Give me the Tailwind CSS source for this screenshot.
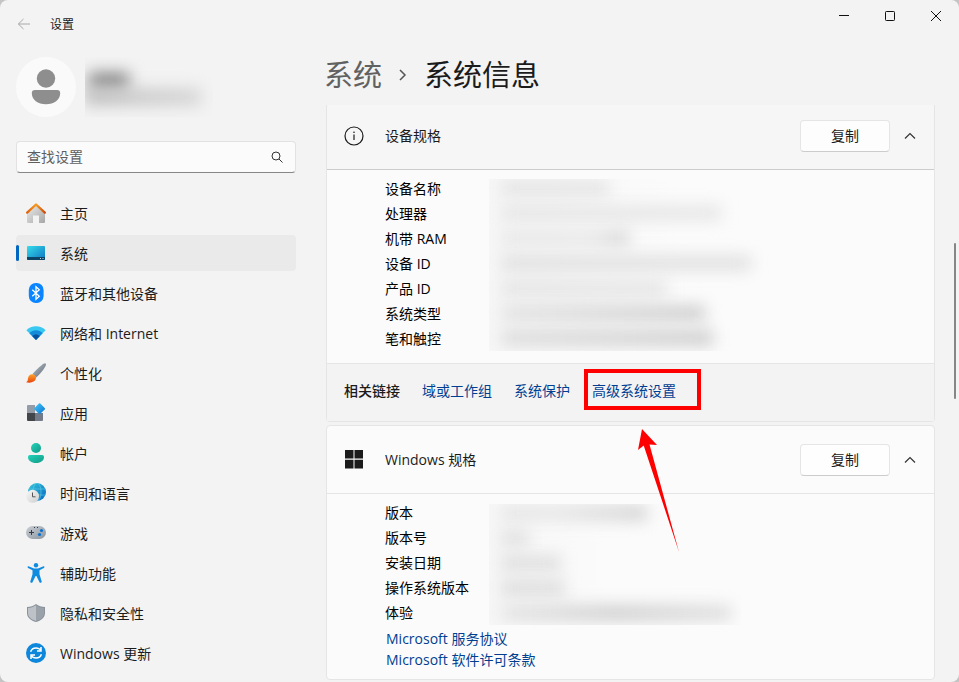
<!DOCTYPE html>
<html lang="zh-CN">
<head>
<meta charset="utf-8">
<meta name="viewport" content="width=device-width, initial-scale=1">
<title>设置</title>
<script src="https://cdn.jsdelivr.net/npm/@tailwindcss/browser@4"></script>
</head>
<body class="bg-[#c4c4c4] font-['Open_Sans','Noto_Sans_CJK_SC',sans-serif] text-sm leading-5 text-[#1b1b1b]">
<div class="relative flex min-h-screen flex-col overflow-hidden rounded-lg bg-[#f3f3f3]">
  <header class="flex h-12 items-start justify-between">
    <div class="flex h-12 items-center gap-[19px] pl-[17px]">
      <button type="button" aria-label="返回" class="text-[#a8a8a8]">
        <svg class="h-3.5 w-3.5" viewBox="0 0 14 14" fill="none" stroke="currentColor"><path d="M13 7H1.5M6.5 2L1.3 7l5.2 5"/></svg>
      </button>
      <span class="pt-0.5 text-xs">设置</span>
    </div>
    <div class="flex h-8">
      <button type="button" aria-label="最小化" class="grid w-[46px] place-items-center"><svg class="h-2.5 w-2.5" viewBox="0 0 10 10" stroke="#111"><path d="M0 4.5h10"/></svg></button>
      <button type="button" aria-label="最大化" class="grid w-[46px] place-items-center"><svg class="h-2.5 w-2.5" viewBox="0 0 10 10" fill="none" stroke="#111"><rect x=".5" y=".5" width="9" height="9" rx=".8"/></svg></button>
      <button type="button" aria-label="关闭" class="grid w-[46px] place-items-center"><svg class="h-2.5 w-2.5" viewBox="0 0 10 10" stroke="#111"><path d="M0 0l10 10M10 0L0 10"/></svg></button>
    </div>
  </header>

  <div class="flex flex-1">
    <aside class="w-[296px] shrink-0 pt-[9px] pl-4">
      <div class="flex items-center gap-[9px]">
        <div class="grid h-15 w-15 place-items-center rounded-full bg-[#fafafa]">
          <svg class="h-9 w-9" viewBox="0 0 36 36" fill="#8e8e8e"><circle cx="18" cy="9.5" r="9.2"/><path d="M7 21h22a3.2 3.2 0 0 1 3.2 3.2c0 6.500-6 11-14.200 11S3.800 30.700 3.800 24.200A3.200 3.200 0 0 1 7 21z"/></svg>
        </div>
        <div class="h-15 w-32 overflow-hidden pt-4" aria-hidden="true">
          <div class="ml-1 h-4 w-10 bg-[#808080] blur-[8px]"></div>
          <div class="h-4 w-29 bg-linear-to-r from-[#bcbcbc] to-[#d4d4d4] blur-[8px]"></div>
        </div>
      </div>
      <label class="mt-6 flex h-8 items-center rounded border border-[#e2e2e2] border-b-[#868686] bg-[#fbfbfb] pr-3 pl-2.5">
        <input type="search" aria-label="查找设置" placeholder="查找设置" class="min-w-0 flex-1 bg-transparent outline-none placeholder:text-[#5f5f5f]">
        <svg class="h-3 w-3" viewBox="0 0 12 12" fill="none" stroke="#333"><circle cx="5" cy="5" r="4"/><path d="M8 8l3.500 3.500"/></svg>
      </label>
      <nav class="mt-[22px] flex flex-col gap-1">
        <a href="#" class="flex h-9 items-center gap-3.5 rounded pl-2.5">
          <svg class="h-5 w-5" viewBox="0 0 20 20"><defs><linearGradient id="hw" x2="1" y2="1"><stop stop-color="#ececec"/><stop offset="1" stop-color="#a6a6a6"/></linearGradient><linearGradient id="hr"><stop stop-color="#e0620c"/><stop offset=".5" stop-color="#f79a1e"/><stop offset="1" stop-color="#cf4a0a"/></linearGradient></defs><path d="M1 9l9-7.500L19 9v9.500a1.300 1.300 0 0 1-1.300 1.500H13v-7.500H7V20H2.300A1.300 1.300 0 0 1 1 18.500z" fill="url(#hw)"/><path d="M1.200 9.600L10 1.500l8.800 8.100" fill="none" stroke="url(#hr)" stroke-width="2.300" stroke-linecap="round" stroke-linejoin="round"/></svg>
          <span class="pt-0.5">主页</span></a>
        <a href="#" aria-current="page" class="relative flex h-9 items-center gap-3.5 rounded bg-[#eaeaea] pl-2.5">
          <span class="absolute left-0 h-4 w-[3px] rounded-full bg-[#0067c0]"></span>
          <svg class="h-5 w-5" viewBox="0 0 20 20"><defs><linearGradient id="sy" x2="1" y2="1"><stop stop-color="#35dcea"/><stop offset="1" stop-color="#0f74c4"/></linearGradient></defs><rect x="1" y="3" width="18" height="14" rx="1" fill="url(#sy)"/><path d="M1 14h18v2a1 1 0 0 1-1 1H2a1 1 0 0 1-1-1z" fill="#0b4467"/><path d="M14 15.500h1M16.500 15.500h1" stroke="#b9d5e4"/></svg>
          <span class="pt-0.5">系统</span></a>
        <a href="#" class="flex h-9 items-center gap-3.5 rounded pl-2.5">
          <svg class="h-5 w-5" viewBox="0 0 20 20"><rect x="2.800" width="14.800" height="20" rx="7" fill="#0a84ff"/><path d="M6.300 6.700l7 6.500L10 16.300V3.700l3.300 3.100-7 6.500" fill="none" stroke="#fff" stroke-width="1.300"/></svg>
          <span class="pt-0.5">蓝牙和其他设备</span></a>
        <a href="#" class="flex h-9 items-center gap-3.5 rounded pl-2.5">
          <svg class="h-5 w-5" viewBox="0 0 20 20"><path d="M.4 7.300C5 1.800 15 1.800 19.600 7.300L10 17z" fill="#38c8f2"/><path d="M3.400 10.300c3.300-4 9.900-4 13.200 0L10 17z" fill="#138bd8"/><path d="M6.200 13.100c2-2.300 5.600-2.300 7.600 0L10 17z" fill="#08529d"/></svg>
          <span class="pt-0.5">网络和 Internet</span></a>
        <a href="#" class="flex h-9 items-center gap-3.5 rounded pl-2.5">
          <svg class="h-5 w-5" viewBox="0 0 20 20"><defs><linearGradient id="br" x2="1" y2="1"><stop stop-color="#b7c0c9"/><stop offset="1" stop-color="#5e6a76"/></linearGradient><linearGradient id="bt" x2="0" y2="1"><stop stop-color="#ffa42b"/><stop offset="1" stop-color="#e8450c"/></linearGradient></defs><path d="M19.600.5c1 1-.1 3.200-2 5.700-2.200 3-5 6.300-7.400 8.300L6.500 11C9 8 12.500 4.600 15.300 2.400 17.200.9 18.900-.2 19.600.5z" fill="url(#br)"/><path d="M6.500 11.200c2 .3 3.500 1.700 3.500 3.600-.2 4-5 5.700-10 4.400 2-.8 1.700-2 2-4 .3-2.300 2-4.200 4.500-4z" fill="url(#bt)"/></svg>
          <span class="pt-0.5">个性化</span></a>
        <a href="#" class="flex h-9 items-center gap-3.5 rounded pl-2.5">
          <svg class="h-5 w-5" viewBox="0 0 20 20"><defs><linearGradient id="ap" x2="1" y2="1"><stop stop-color="#46c8fa"/><stop offset="1" stop-color="#0874d1"/></linearGradient></defs><path d="M2 2h7v8H1V3a1 1 0 0 1 1-1z" fill="#949ca7"/><path d="M1 10h8v8H2a1 1 0 0 1-1-1z" fill="#42464b"/><path d="M9 10h8v7a1 1 0 0 1-1 1H9z" fill="#727b87"/><path d="M12.900.6a1 1 0 0 1 1.400 0l4.400 4.400a1 1 0 0 1 0 1.400l-4.400 4.400a1 1 0 0 1-1.400 0L8.500 6.400a1 1 0 0 1 0-1.400z" fill="url(#ap)"/></svg>
          <span class="pt-0.5">应用</span></a>
        <a href="#" class="flex h-9 items-center gap-3.5 rounded pl-2.5">
          <svg class="h-5 w-5" viewBox="0 0 20 20"><defs><linearGradient id="ac" x2="1" y2="1"><stop stop-color="#25d2b8"/><stop offset="1" stop-color="#109a87"/></linearGradient></defs><circle cx="10" cy="5" r="5" fill="url(#ac)"/><path d="M4 12h12a2 2 0 0 1 2 2c0 3.600-3.300 6-8 6s-8-2.400-8-6a2 2 0 0 1 2-2z" fill="url(#ac)"/></svg>
          <span class="pt-0.5">帐户</span></a>
        <a href="#" class="flex h-9 items-center gap-3.5 rounded pl-2.5">
          <svg class="h-5 w-5" viewBox="0 0 20 20"><defs><linearGradient id="gl" x2="1" y2="1"><stop stop-color="#35c9dc"/><stop offset="1" stop-color="#0965bd"/></linearGradient><linearGradient id="ck" x2="1" y2="1"><stop stop-color="#f8f8f8"/><stop offset="1" stop-color="#cfcfcf"/></linearGradient></defs><circle cx="11" cy="9" r="9" fill="url(#gl)"/><g fill="none" stroke="#5fd0ea" stroke-width=".6"><ellipse cx="11" cy="9" rx="4" ry="9"/><path d="M3 6h16M3 12h16"/></g><circle cx="6.600" cy="13.300" r="6.500" fill="url(#ck)"/><path d="M6.500 9.500v4.300h3" fill="none" stroke="#555"/></svg>
          <span class="pt-0.5">时间和语言</span></a>
        <a href="#" class="flex h-9 items-center gap-3.5 rounded pl-2.5">
          <svg class="h-5 w-5" viewBox="0 0 20 20"><defs><linearGradient id="gm" x2="1" y2="1"><stop stop-color="#c9ced4"/><stop offset="1" stop-color="#8b949e"/></linearGradient></defs><rect y="3" width="20" height="13" rx="6.500" fill="url(#gm)"/><path d="M5.500 7v5M3 9.500h5M8 4.500h1M11 4.500h1" stroke="#343a40"/><circle cx="15.500" cy="7.500" r="1.600" fill="#0872cf"/><circle cx="13.500" cy="11.500" r="1.600" fill="#0872cf"/></svg>
          <span class="pt-0.5">游戏</span></a>
        <a href="#" class="flex h-9 items-center gap-3.5 rounded pl-2.5">
          <svg class="h-5 w-5" viewBox="0 0 20 20"><g fill="#0f8be0"><circle cx="10" cy="2.300" r="2.200"/><path d="M2.500 3.300L8 5.500h4l5.500-2.200c1-.3 1.300 1.300.4 1.700L13.500 7.200v4l2.200 7.200c.3 1.400-1.700 2-2.200.8L10.400 13h-.8l-3.100 6.200c-.5 1.200-2.500.6-2.200-.8l2.200-7.200v-4L2.100 5c-.9-.4-.6-2 .4-1.700z"/></g></svg>
          <span class="pt-0.5">辅助功能</span></a>
        <a href="#" class="flex h-9 items-center gap-3.5 rounded pl-2.5">
          <svg class="h-5 w-5" viewBox="0 0 20 20"><path d="M10 1c2.500 2 5.500 3 9 3v6c0 4.500-4 7.800-9 9-5-1.200-9-4.500-9-9V4c3.500 0 6.500-1 9-3z" fill="#8a929b"/><path d="M10 2.200c2.400 1.700 5 2.600 8 2.700V10c0 3.900-3.500 6.700-8 7.900z" fill="#9aa1a9"/><path d="M10 2.200C7.600 3.900 5 4.800 2 4.900V10c0 3.900 3.500 6.700 8 7.900z" fill="#bcc2c8"/></svg>
          <span class="pt-0.5">隐私和安全性</span></a>
        <a href="#" class="flex h-9 items-center gap-3.5 rounded pl-2.5">
          <svg class="h-5 w-5" viewBox="0 0 20 20"><circle cx="10" cy="10" r="10" fill="#0d87dc"/><path d="M4.600 8.800C5.500 6.200 7.500 5 10 5c2.200 0 3.800.9 5 2.700M15 4v4h-4M15.400 11.200C14.500 13.800 12.500 15 10 15c-2.200 0-3.800-.9-5-2.700M5 16v-4h4" fill="none" stroke="#fff" stroke-width="1.500"/></svg>
          <span class="pt-0.5">Windows 更新</span></a>
      </nav>
    </aside>

    <main class="flex min-w-0 flex-1 flex-col pr-6 pl-[30px]">
      <h1 class="-ml-0.5 flex h-[57px] items-center gap-[17px] pb-1 text-[29px] leading-9">
        <a href="#" class="text-[#616161]">系统</a>
        <svg class="h-3 w-2" viewBox="0 0 8 12" fill="none" stroke="#555" stroke-width="1.500"><path d="M1 1l5 5-5 5"/></svg>
        <span>系统信息</span>
      </h1>

      <section class="rounded-b border border-t-0 border-[#e5e5e5] bg-[#fbfbfb]">
        <div class="flex h-[65px] items-center border-b border-[#cccccc] bg-[#f6f6f6] pr-[15px] pb-0.5 pl-[17px]">
          <svg class="h-5 w-5" viewBox="0 0 20 20" fill="none" stroke="#1b1b1b"><circle cx="10" cy="10" r="9" stroke-width="1.200"/><path d="M10 8.500V14" stroke-width="1.200"/><circle cx="10" cy="6.200" r=".4"/></svg>
          <h2 class="ml-[21px] flex-1">设备规格</h2>
          <button type="button" class="h-8 w-[90px] rounded border border-[#e5e5e5] border-b-[#cccccc] bg-[#fdfdfd]">复制</button>
          <button type="button" aria-label="折叠设备规格" class="ml-[11px] grid h-5 w-[18px] place-items-center"><svg class="h-2 w-3" viewBox="0 0 12 8" fill="none" stroke="#333" stroke-width="1.200"><path d="M1 6.500l5-5 5 5"/></svg></button>
        </div>
        <div class="flex pt-1.5 pb-3 pl-[58px] leading-[25px] text-black">
          <ul class="w-[104px]">
            <li>设备名称</li><li>处理器</li><li>机带 RAM</li><li>设备 ID</li><li>产品 ID</li><li>系统类型</li><li>笔和触控</li>
          </ul>
          <div class="mt-[3px] flex h-[172px] w-[280px] flex-col gap-[11px] overflow-hidden bg-linear-to-r from-[#f7f7f7] to-[#fbfbfb] to-70% pt-0.5 pl-3" aria-hidden="true">
            <div class="h-3.5 w-[108px] shrink-0 bg-[#e2e2e2] blur-[8px]"></div>
            <div class="h-3.5 w-[220px] shrink-0 bg-[#e4e4e4] blur-[8px]"></div>
            <div class="h-3.5 w-[128px] shrink-0 bg-linear-to-r from-[#e6e6e6] from-70% to-[#d2d2d2] blur-[8px]"></div>
            <div class="h-3.5 w-[250px] shrink-0 bg-[#dedede] blur-[8px]"></div>
            <div class="h-3.5 w-[166px] shrink-0 bg-[#e2e2e2] blur-[8px]"></div>
            <div class="h-3.5 w-[204px] shrink-0 bg-linear-to-r from-[#e0e0e0] via-[#d4d4d4] to-[#c8c8c8] blur-[8px]"></div>
            <div class="h-3.5 w-[212px] shrink-0 bg-linear-to-r from-[#dadada] to-[#c8c8c8] blur-[8px]"></div>
          </div>
        </div>
        <div class="flex h-[58px] items-center gap-[22px] border-t border-[#e5e5e5] bg-[#f3f3f3] pb-1 pl-[17px] text-[#003e92]">
          <h3 class="font-medium text-[#1b1b1b]">相关链接</h3>
          <a href="#">域或工作组</a>
          <a href="#">系统保护</a>
          <div class="relative z-10">
            <a href="#">高级系统设置</a>
            <div class="pointer-events-none absolute -top-3 -right-[25px] -bottom-[9px] -left-2 border-4 border-[#ff0000]"></div>
            <svg class="pointer-events-none absolute top-12 left-[46px] h-[123px] w-[41px]" viewBox="0 0 41 123" fill="#ff0000"><path d="M4 0L19 16l-7.500-.5L41 123 5.700 16.500 0 21z"/></svg>
          </div>
        </div>
      </section>

      <section class="mt-[3px] rounded border border-[#e5e5e5] bg-[#fbfbfb]">
        <div class="flex h-[68px] items-center border-b border-[#e5e5e5] pr-[15px] pl-[17px]">
          <svg class="h-5 w-5" viewBox="0 0 20 20" fill="#1b1b1b"><path d="M1 0h8.500v8.500H1zM10.500 0h8.500v8.500h-8.500zM1 9.800h8.500v8.700H1zM10.500 9.800h8.500v8.700h-8.500z"/></svg>
          <h2 class="ml-[21px] flex-1">Windows 规格</h2>
          <button type="button" class="h-8 w-[90px] rounded border border-[#e5e5e5] border-b-[#cccccc] bg-[#fefefe]">复制</button>
          <button type="button" aria-label="折叠 Windows 规格" class="ml-[11px] grid h-5 w-[18px] place-items-center"><svg class="h-2 w-3" viewBox="0 0 12 8" fill="none" stroke="#333" stroke-width="1.200"><path d="M1 6.500l5-5 5 5"/></svg></button>
        </div>
        <div class="pt-1.5 pb-[9px] pl-[58px]">
          <div class="flex leading-[25px] text-black">
            <ul class="w-[104px]">
              <li>版本</li><li>版本号</li><li>安装日期</li><li>操作系统版本</li><li>体验</li>
            </ul>
            <div class="mt-1 flex h-[121px] w-[252px] flex-col gap-[11px] overflow-hidden bg-linear-to-r from-[#f7f7f7] to-[#fbfbfb] to-50% pt-0.5 pl-3" aria-hidden="true">
              <div class="h-3.5 w-[146px] shrink-0 bg-linear-to-r from-[#e4e4e4] from-40% to-[#cecece] blur-[8px]"></div>
              <div class="h-3.5 w-7 shrink-0 bg-[#dedede] blur-[8px]"></div>
              <div class="h-3.5 w-[60px] shrink-0 bg-[#dcdcdc] blur-[8px]"></div>
              <div class="h-3.5 w-[64px] shrink-0 bg-[#dadada] blur-[8px]"></div>
              <div class="h-3.5 w-[230px] shrink-0 bg-linear-to-r from-[#e2e2e2] via-[#cacaca] to-[#dcdcdc] blur-[8px]"></div>
            </div>
          </div>
          <div class="mt-[3px] flex flex-col items-start pl-px leading-[21px] text-[#003e92]">
            <a href="#">Microsoft 服务协议</a>
            <a href="#">Microsoft 软件许可条款</a>
          </div>
        </div>
      </section>
    </main>
  </div>
  <div class="absolute top-[243px] right-[3px] h-[156px] w-0.5 rounded-full bg-[#868686]"></div>
</div>
</body>
</html>
